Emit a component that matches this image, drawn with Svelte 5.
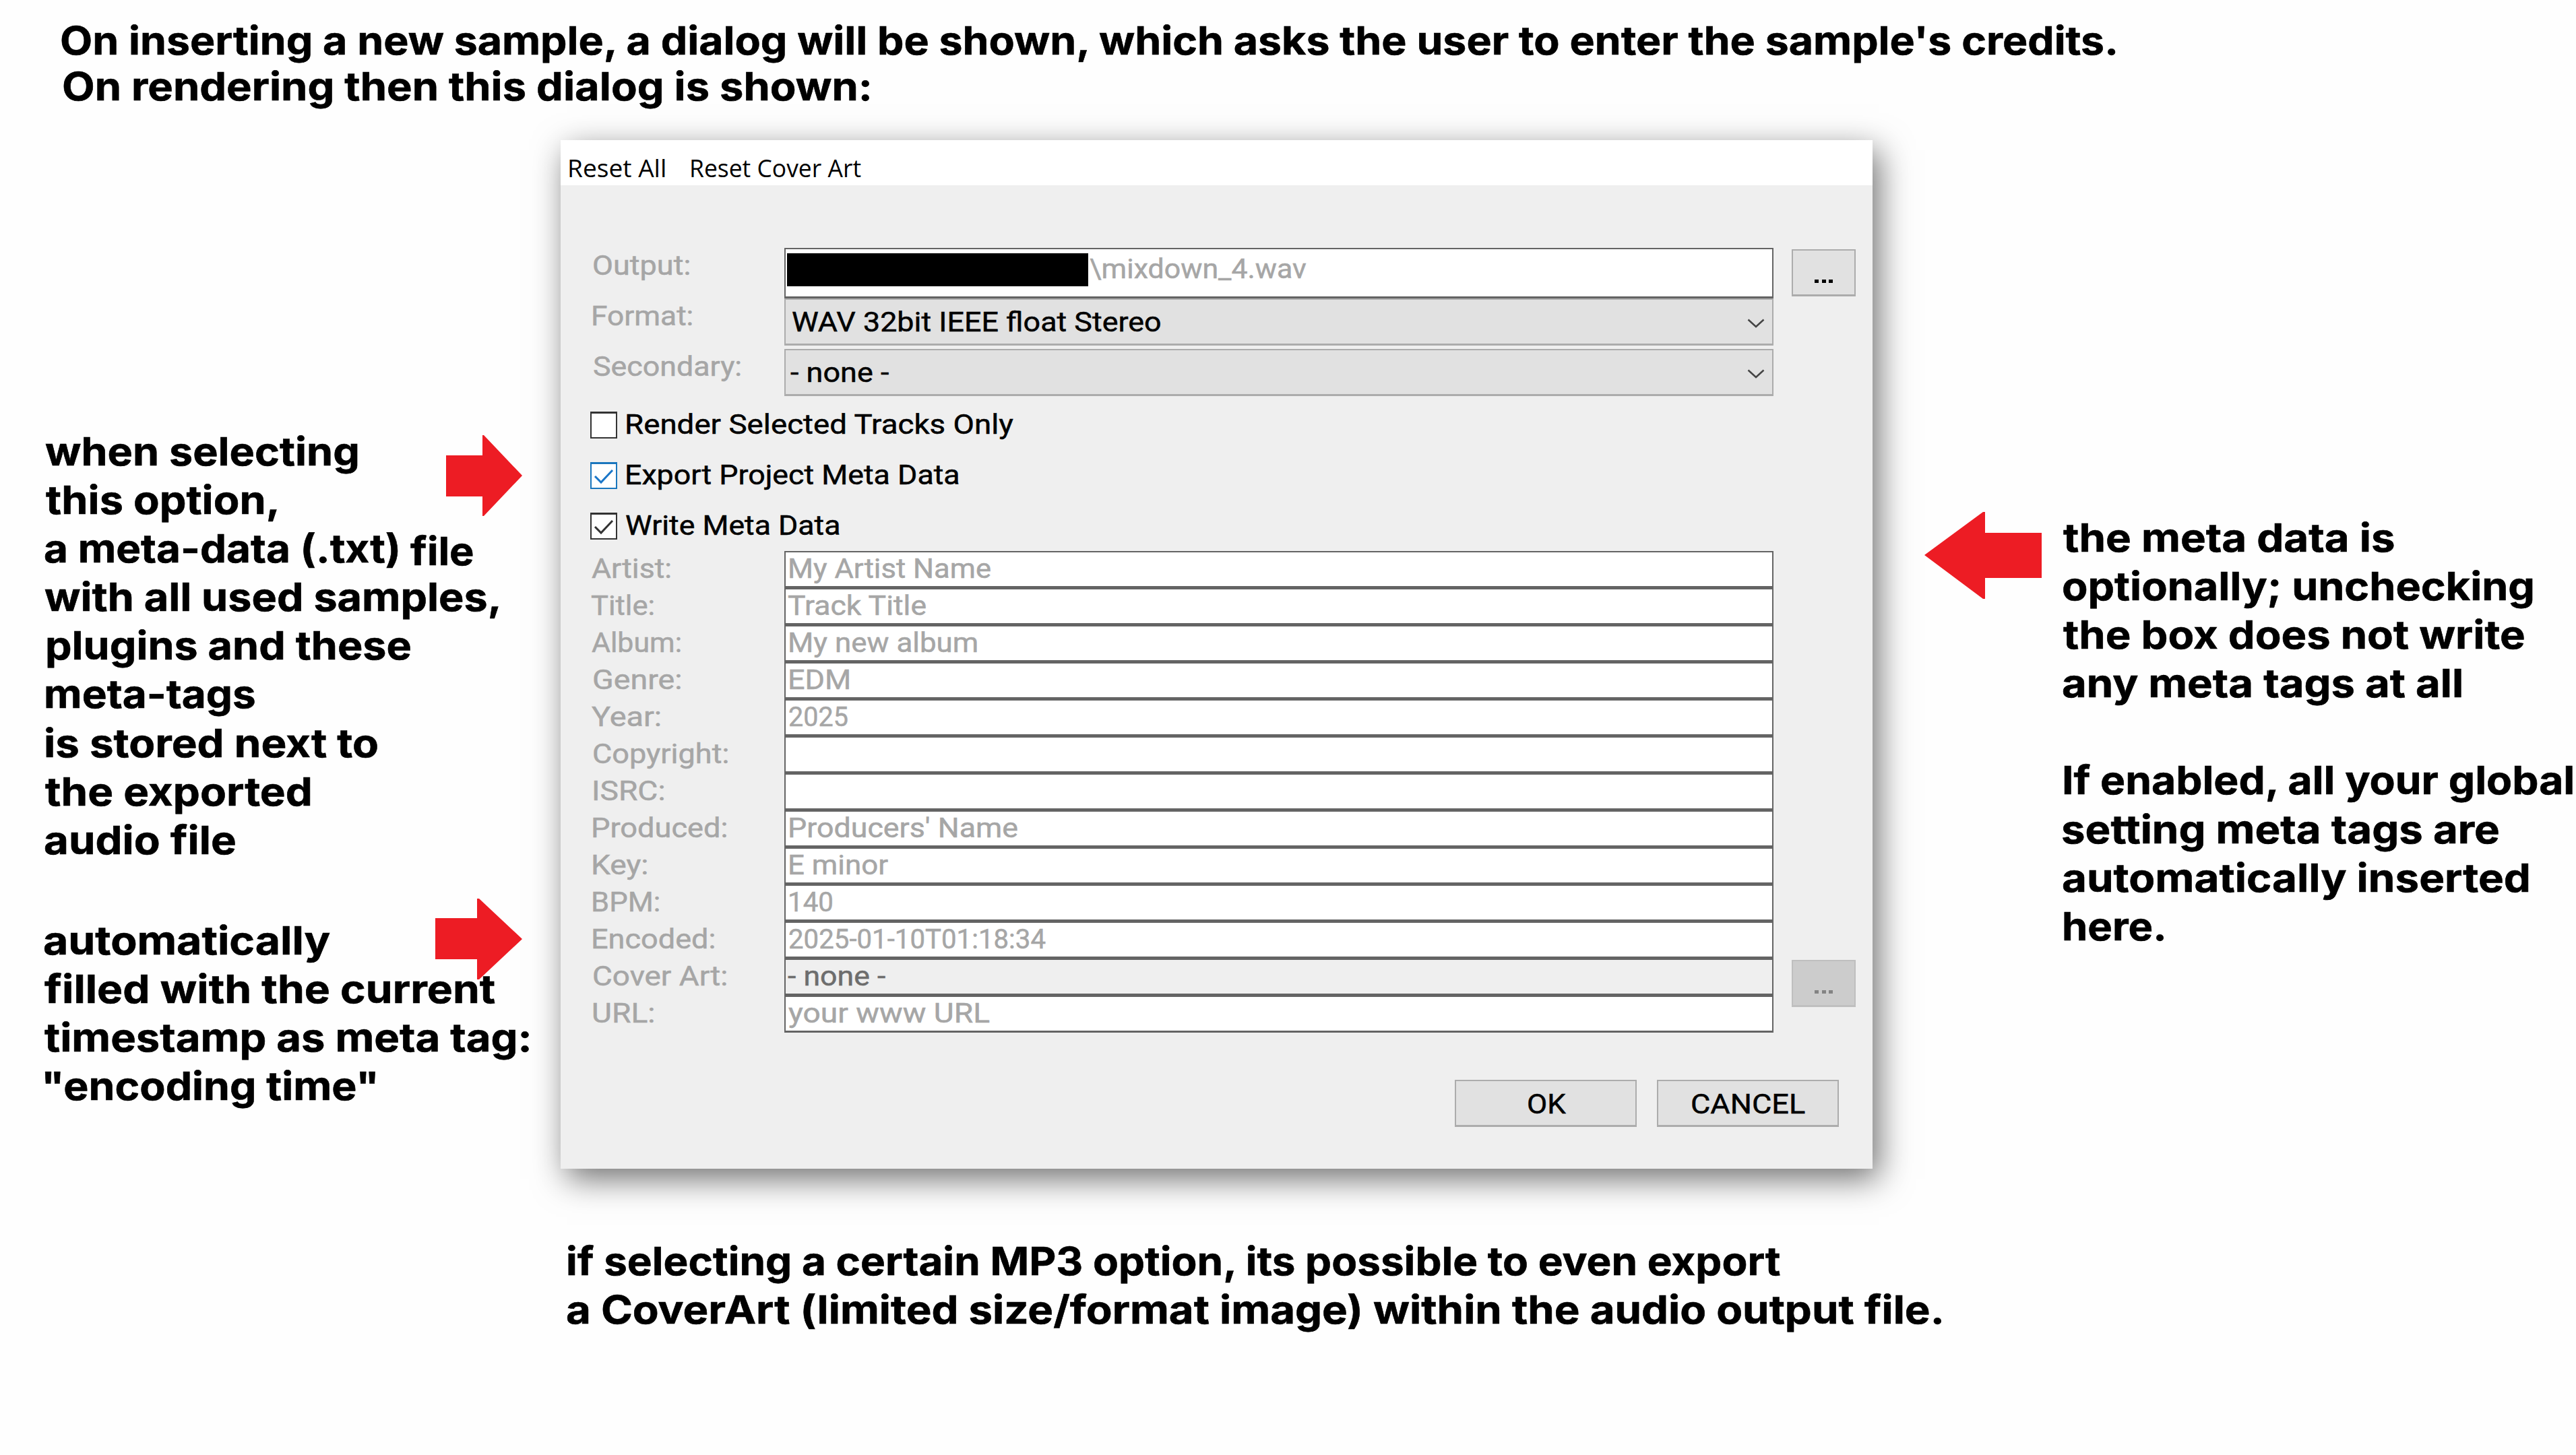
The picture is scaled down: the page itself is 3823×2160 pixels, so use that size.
<script>
  const intro = [
    { t: "On inserting a new sample, a dialog will be shown, which asks the user to enter the sample's credits.", x: 91, w: 3052 },
    { t: 'On rendering then this dialog is shown:', x: 94, w: 1196 }
  ];
  const exportNote = [
    [{ t: 'when selecting', x: 67, w: 464 }],
    [{ t: 'this option,', x: 68, w: 343 }],
    [{ t: 'a meta-data (.txt)', x: 66, w: 525 }, { t: 'file', x: 609, w: 93, low: true }],
    [{ t: 'with all used samples,', x: 66, w: 674 }],
    [{ t: 'plugins and these', x: 70, w: 539 }],
    [{ t: 'meta-tags', x: 68, w: 310 }],
    [{ t: 'is stored next to', x: 68, w: 492 }],
    [{ t: 'the exported', x: 67, w: 393 }],
    [{ t: 'audio file', x: 66, w: 283 }]
  ];
  const timeNote = [
    { t: 'automatically', x: 65, w: 424 },
    { t: 'filled with the current', x: 66, w: 669 },
    { t: 'timestamp as meta tag:', x: 66, w: 719 },
    { t: '"encoding time"', x: 66, w: 491 }
  ];
  const metaNote = [
    { t: 'the meta data is', x: 1, w: 491 },
    { t: 'optionally; unchecking', x: 1, w: 697 },
    { t: 'the box does not write', x: 1, w: 684 },
    { t: 'any meta tags at all', x: 0, w: 592 }
  ];
  const globalNote = [
    { t: 'If enabled, all your global', x: 2, w: 757 },
    { t: 'setting meta tags are', x: 0, w: 647 },
    { t: 'automatically inserted', x: 0, w: 691 },
    { t: 'here.', x: 2, w: 148 }
  ];
  const coverNote = [
    { t: 'if selecting a certain MP3 option, its possible to even export', x: 843, w: 1801 },
    { t: 'a CoverArt (limited size/format image) within the audio output file.', x: 841, w: 2040 }
  ];
  const selects = [
    { l: { t: 'Format:', x: 4, w: 147 }, v: { t: 'WAV 32bit IEEE float Stereo', x: 10, w: 546 } },
    { l: { t: 'Secondary:', x: 5, w: 218 }, v: { t: '- none -', x: 7, w: 146 } }
  ];
  const checks = [
    { t: 'Render Selected Tracks Only', x: 14, w: 574, on: false, hot: false },
    { t: 'Export Project Meta Data', x: 14, w: 493, on: true, hot: true },
    { t: 'Write Meta Data', x: 13, w: 317, on: true, hot: false }
  ];
  const meta = [
    { l: { t: 'Artist:', x: 2, w: 117 }, v: { t: 'My Artist Name', x: 6, w: 298 } },
    { l: { t: 'Title:', x: 2, w: 92 }, v: { t: 'Track Title', x: 4, w: 205 } },
    { l: { t: 'Album:', x: 2, w: 132 }, v: { t: 'My new album', x: 6, w: 278 } },
    { l: { t: 'Genre:', x: 5, w: 129 }, v: { t: 'EDM', x: 6, w: 88 } },
    { l: { t: 'Year:', x: 2, w: 102 }, v: { t: '2025', x: 5, w: 87 } },
    { l: { t: 'Copyright:', x: 5, w: 199 } },
    { l: { t: 'ISRC:', x: 5, w: 104 } },
    { l: { t: 'Produced:', x: 4, w: 198 }, v: { t: "Producers' Name", x: 6, w: 338 } },
    { l: { t: 'Key:', x: 4, w: 80 }, v: { t: 'E minor', x: 6, w: 146 } },
    { l: { t: 'BPM:', x: 4, w: 98 }, v: { t: '140', x: 6, w: 63 } },
    { l: { t: 'Encoded:', x: 4, w: 180 }, v: { t: '2025-01-10T01:18:34', x: 5, w: 381 } },
    { l: { t: 'Cover Art:', x: 5, w: 197 }, v: { t: '- none -', x: 3, w: 145 }, readonly: true },
    { l: { t: 'URL:', x: 4, w: 90 }, v: { t: 'your www URL', x: 4, w: 299 } }
  ];

  // Stretches a run of text so its ink starts at x and spans w pixels.
  function fit(node, { t, x, w }) {
    const cs = getComputedStyle(node);
    const ctx = document.createElement('canvas').getContext('2d');
    ctx.font = `${cs.fontWeight} ${cs.fontSize} ${cs.fontFamily}`;
    const m = ctx.measureText(t);
    const k = w / (m.actualBoundingBoxLeft + m.actualBoundingBoxRight);
    node.style.transform = `scaleX(${k})`;
    node.style.marginLeft = `${x + m.actualBoundingBoxLeft * k}px`;
  }
</script>

{#snippet run(s)}<span class="run" use:fit={s}>{s.t}</span>{/snippet}

{#snippet dots()}
  <svg class="dots" viewBox="0 0 27 5" width="27" height="5" shape-rendering="crispEdges">
    <path d="M0 0h6v5h-6zM10.500 0h6v5h-6zM21 0h6v5h-6z" fill="currentColor" />
  </svg>
{/snippet}

<main>
  <header>
    {#each intro as s}<p>{@render run(s)}</p>{/each}
  </header>

  <div class="stage">
    <aside class="left">
      <div class="note">
        {#each exportNote as line}
          <p>
            {#each line as s, i}
              {#if i === 0}{@render run(s)}{:else}<span class="over" class:low={s.low}>{@render run(s)}</span>{/if}
            {/each}
          </p>
        {/each}
        <svg class="arrow a1" viewBox="0 0 113 120" width="113" height="120"><path d="M0 30H54V0H56L113 60L56 120H54V91H0Z" fill="#ed1c24" /></svg>
      </div>
      <div class="note time">
        <svg class="arrow a2" viewBox="0 0 129 120" width="129" height="120"><path d="M0 29H62V0H65L129 60L65 120H62V90H0Z" fill="#ed1c24" /></svg>
        {#each timeNote as s}<p>{@render run(s)}</p>{/each}
      </div>
    </aside>

    <section class="dialog">
      <nav>
        <div>{@render run({ t: 'Reset All', x: 13, w: 142 })}</div>
        <div>{@render run({ t: 'Reset Cover Art', x: 14, w: 252 })}</div>
      </nav>
      <div class="body">
        <div class="row tall">
          <div class="label">{@render run({ t: 'Output:', x: 5, w: 142 })}</div>
          <div class="field output"><i class="redacted"></i>{@render run({ t: '\\mixdown_4.wav', x: 2, w: 322 })}</div>
          <button class="browse">{@render dots()}</button>
        </div>
        {#each selects as s}
          <div class="row tall">
            <div class="label">{@render run(s.l)}</div>
            <div class="select">
              {@render run(s.v)}
              <svg viewBox="0 0 26 14" width="26" height="14"><path d="M1.500 1.500L13 12L24.500 1.500" fill="none" stroke="#444" stroke-width="2.500" /></svg>
            </div>
          </div>
        {/each}
        {#each checks as c}
          <div class="check" class:hot={c.hot}>
            <span class="box">
              {#if c.on}
                <svg viewBox="0 0 40 40" width="40" height="40"><path d="M7 21L16 30L33 12" fill="none" stroke="currentColor" stroke-width="3" /></svg>
              {/if}
            </span>
            {@render run(c)}
          </div>
        {/each}
        {#each meta as m}
          <div class="row">
            <div class="label">{@render run(m.l)}</div>
            <div class="field" class:readonly={m.readonly}>{#if m.v}{@render run(m.v)}{/if}</div>
            {#if m.readonly}<button class="browse off" disabled>{@render dots()}</button>{/if}
          </div>
        {/each}
        <footer>
          <button>{@render run({ t: 'OK', x: 107, w: 56 })}</button>
          <button>{@render run({ t: 'CANCEL', x: 50, w: 168 })}</button>
        </footer>
      </div>
    </section>

    <aside class="right">
      <svg viewBox="0 0 174 129" width="174" height="129"><path d="M0 64L87 0H90V31H174V98H90V129H87Z" fill="#ed1c24" /></svg>
      <div class="note">
        {#each metaNote as s}<p>{@render run(s)}</p>{/each}
        <p></p>
        {#each globalNote as s}<p>{@render run(s)}</p>{/each}
      </div>
    </aside>
  </div>

  <div class="cover">
    {#each coverNote as s}<p>{@render run(s)}</p>{/each}
  </div>
</main>

<style>
  :global(body) { margin: 0; background: #fefefe; }
  main {
    width: 3823px;
    height: 2160px;
    overflow: hidden;
    box-sizing: border-box;
    padding-top: 26px;
    font: 700 58px Inter, sans-serif;
    color: #000;
    white-space: nowrap;
    -webkit-text-stroke: 0.6px currentColor;
  }
  p { margin: 0; height: 72.1px; line-height: 72.1px; display: flex; }
  header { height: 182px; }
  header p { height: 68px; line-height: 68px; }
  .run { display: inline-block; white-space: pre; flex: none; transform-origin: 0 50%; }
  .stage { display: flex; height: 1527px; }
  .left { width: 832px; flex: none; padding-top: 426px; box-sizing: border-box; }
  .note { position: relative; }
  .time { margin-top: 77px; }
  .over { position: absolute; left: 0; }
  .low { padding-top: 4px; }
  .arrow { position: absolute; }
  .a1 { left: 662px; top: 12px; }
  .a2 { left: 646px; top: -26px; }
  .time p { position: relative; }

  .dialog {
    width: 1947px;
    flex: none;
    background: #efefef;
    box-shadow: 9px 15px 46px rgba(0, 0, 0, 0.56);
    font: 400 41px Roboto, sans-serif;
    -webkit-text-stroke: 0.5px currentColor;
  }
  nav {
    display: flex;
    height: 67px;
    background: #fff;
    font: 400 37px 'Open Sans', sans-serif;
    line-height: 81px;
    -webkit-text-stroke: 0;
  }
  nav div { width: 180px; }
  .body { padding: 93px 25px 0 44px; }
  .row { display: flex; height: 55px; }
  .row.tall { height: 75px; }
  .label { width: 288px; flex: none; line-height: 52px; color: #a6a6a6; }
  .field {
    display: flex;
    box-sizing: border-box;
    width: 1468px;
    flex: none;
    border: solid #646464;
    border-width: 2px 2px 3px 2px;
    background: #fff;
    color: #a6a6a6;
    line-height: 48px;
  }
  .field.readonly { background: #efefef; color: #6d6d6d; }
  .output { line-height: 58px; }
  .redacted { width: 447px; height: 49px; margin: 6px 0 0 2px; background: #000; }
  .select {
    display: flex;
    justify-content: space-between;
    box-sizing: border-box;
    width: 1468px;
    height: 70px;
    border: solid #acacac;
    border-width: 2px 2px 3px 2px;
    background: #e1e1e1;
    line-height: 67px;
  }
  .select svg { margin: 28px 11px 0 0; }
  button {
    display: flex;
    box-sizing: border-box;
    width: 270px;
    height: 70px;
    padding: 0;
    border: solid #acacac;
    border-width: 2px 2px 3px 2px;
    border-radius: 0;
    background: #e1e1e1;
    font: inherit;
    line-height: 68px;
    color: #000;
    text-align: left;
  }
  .browse { width: 95px; flex: none; margin: 2px 0 0 27px; justify-content: center; padding-top: 43px; }
  .browse.off { background: #ccc; border-color: #bfbfbf; color: #838383; }
  .check { display: flex; align-items: center; height: 75px; line-height: 75px; }
  .box {
    display: flex;
    flex: none;
    box-sizing: border-box;
    width: 40px;
    height: 40px;
    border: 2px solid #333;
    border-top-width: 3px;
    background: #fff;
    color: #333;
  }
  .box svg { margin: -3px 0 0 -2px; flex: none; }
  .hot .box { border-color: #1a76bd; color: #1a76c8; }
  footer { display: flex; justify-content: flex-end; gap: 30px; padding: 70px 25px 0 0; }

  .right { display: flex; align-items: flex-start; }
  .right svg { margin: 552px 31px 0 77px; flex: none; }
  .right .note { padding-top: 554px; }
  .cover { padding-top: 101px; }
</style>
